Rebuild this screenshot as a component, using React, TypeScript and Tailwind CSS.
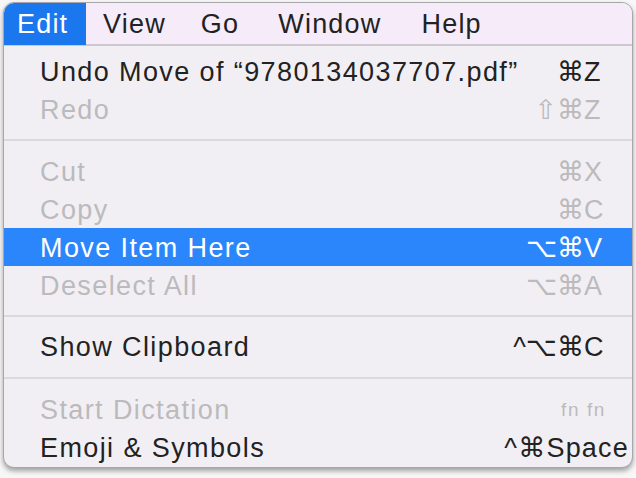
import React from "react";

type Item =
  | { kind: "sep" }
  | {
      kind: "item";
      label: string;
      mods?: string;
      key?: string;
      disabled?: boolean;
      active?: boolean;
      special?: "space" | "fn";
    };

const items: Item[] = [
  { kind: "item", label: "Undo Move of \u201c9780134037707.pdf\u201d", mods: "\u2318", key: "Z" },
  { kind: "item", label: "Redo", mods: "\u21e7\u2318", key: "Z", disabled: true },
  { kind: "sep" },
  { kind: "item", label: "Cut", mods: "\u2318", key: "X", disabled: true },
  { kind: "item", label: "Copy", mods: "\u2318", key: "C", disabled: true },
  { kind: "item", label: "Move Item Here", mods: "\u2325\u2318", key: "V", active: true },
  { kind: "item", label: "Deselect All", mods: "\u2325\u2318", key: "A", disabled: true },
  { kind: "sep" },
  { kind: "item", label: "Show Clipboard", mods: "^\u2325\u2318", key: "C" },
  { kind: "sep" },
  { kind: "item", label: "Start Dictation", disabled: true, special: "fn" },
  { kind: "item", label: "Emoji & Symbols", special: "space" },
];

const font = { fontFamily: '"Liberation Sans", "DejaVu Sans", Arial, sans-serif' };

export default function App() {
  return (
    <div className="w-[636px] h-[478px] bg-[#f7f7f7] overflow-hidden pt-[2px] pl-[3px]" style={font}>
      <div className="w-[630px] h-[466px] rounded-[11px] border border-[#a8a5ab] overflow-hidden bg-[#f2eff4] shadow-[0_3px_5px_rgba(0,0,0,0.35)] flex flex-col">
        <div className="h-[43px] shrink-0 bg-[#f5ebf9] border-b-2 border-[#cdc8cf] flex items-center pt-[2px] text-[27px] tracking-[1.2px] text-[#222]">
          <div className="h-[43px] -mt-[2px] pt-[2px] flex items-center bg-[#1a77ee] text-white pl-[13px] w-[82px]">Edit</div>
          <div className="flex items-center ml-[17px]">
            <span>View</span>
            <span className="ml-[35px]">Go</span>
            <span className="ml-[39px]">Window</span>
            <span className="ml-[40px]">Help</span>
          </div>
        </div>
        <div className="pt-[6px] flex flex-col">
          {items.map((it, i) => {
            if (it.kind === "sep") {
              const h = i === 2 ? "h-[24px]" : i === 7 ? "h-[23px]" : "h-[25px]";
              return (
                <div key={i} className={`${h} flex items-center`}>
                  <div className="w-full h-[2px] bg-[#dcd9de]" />
                </div>
              );
            }
            const color = it.active ? "text-white" : it.disabled ? "text-[#bbbabc]" : "text-[#222]";
            return (
              <div
                key={i}
                className={`h-[38px] flex items-center justify-between pt-[3px] pl-[36px] pr-[24px] text-[27px] ${color} ${
                  it.active ? "bg-[#2b86fb]" : ""
                }`}
              >
                <span className="whitespace-nowrap tracking-[1.4px]">{it.label}</span>
                {it.special === "fn" ? (
                  <span className="text-[19px] mr-[2px] whitespace-nowrap tracking-[1.6px]">fn fn</span>
                ) : it.special === "space" ? (
                  <span className="whitespace-nowrap -mr-[21px] tracking-[1.2px]">^{"\u2318"}Space</span>
                ) : (
                  <span className="flex whitespace-nowrap">
                    <span className="text-right">{it.mods}</span>
                    <span className="w-[24px] text-left">{it.key}</span>
                  </span>
                )}
              </div>
            );
          })}
        </div>
      </div>
    </div>
  );
}
